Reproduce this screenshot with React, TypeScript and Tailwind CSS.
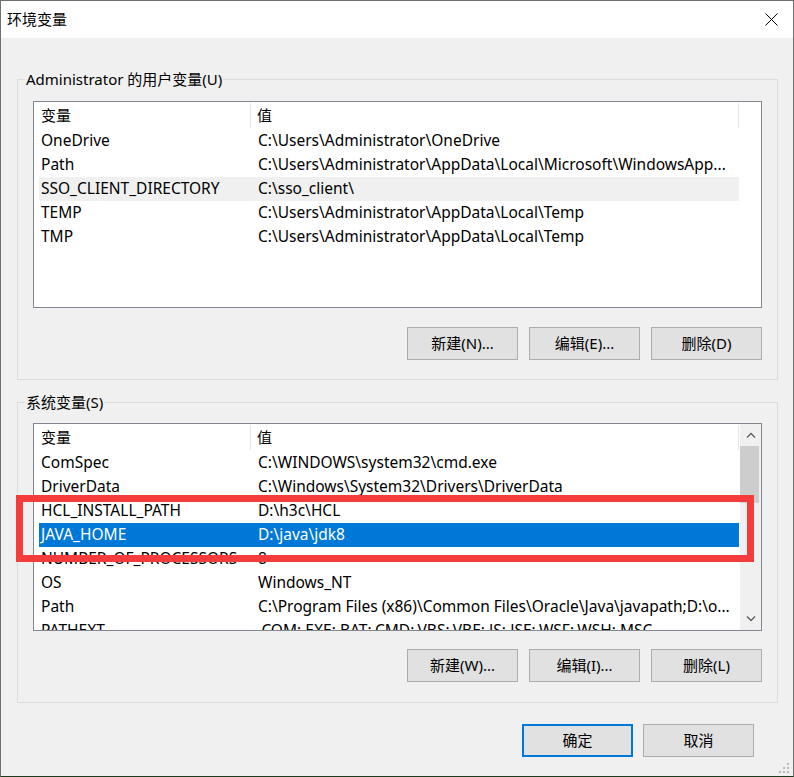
import React from 'react';

type Row = { name: string; value: string };

const userVars: Row[] = [
  { name: 'OneDrive', value: 'C:\\Users\\Administrator\\OneDrive' },
  { name: 'Path', value: 'C:\\Users\\Administrator\\AppData\\Local\\Microsoft\\WindowsApp...' },
  { name: 'SSO_CLIENT_DIRECTORY', value: 'C:\\sso_client\\' },
  { name: 'TEMP', value: 'C:\\Users\\Administrator\\AppData\\Local\\Temp' },
  { name: 'TMP', value: 'C:\\Users\\Administrator\\AppData\\Local\\Temp' },
];

const sysVars: Row[] = [
  { name: 'ComSpec', value: 'C:\\WINDOWS\\system32\\cmd.exe' },
  { name: 'DriverData', value: 'C:\\Windows\\System32\\Drivers\\DriverData' },
  { name: 'HCL_INSTALL_PATH', value: 'D:\\h3c\\HCL' },
  { name: 'JAVA_HOME', value: 'D:\\java\\jdk8' },
  { name: 'NUMBER_OF_PROCESSORS', value: '8' },
  { name: 'OS', value: 'Windows_NT' },
  { name: 'Path', value: 'C:\\Program Files (x86)\\Common Files\\Oracle\\Java\\javapath;D:\\o...' },
  { name: 'PATHEXT', value: '.COM;.EXE;.BAT;.CMD;.VBS;.VBE;.JS;.JSE;.WSF;.WSH;.MSC' },
];

const font = { fontFamily: '"Noto Sans", "Noto Sans CJK SC", sans-serif' };

const Button: React.FC<{ label: string; primary?: boolean }> = ({ label, primary }) => (
  <button
    className={
      primary
        ? 'w-[111px] h-[33px] bg-[#e1e1e1] border-2 border-[#0078d7] text-[15px] text-black'
        : 'w-[111px] h-[33px] bg-[#e1e1e1] border border-[#adadad] text-[15px] text-black'
    }
  >
    {label}
  </button>
);

const ListView: React.FC<{ rows: Row[]; hover?: number; selected?: number; scroll?: boolean; height: string }> = ({
  rows,
  hover,
  selected,
  scroll,
  height,
}) => (
  <div className={`${height} border border-[#828790] bg-white flex overflow-hidden`}>
    <div className="flex-1 pl-[5px] overflow-hidden">
      <div className="w-[700px] h-[27px] flex text-[15px]">
        <div className="w-[212px] pl-[2px] flex items-center border-r border-[#e5e5e5] my-[1px]">变量</div>
        <div className="flex-1 pl-[6px] flex items-center border-r border-[#e5e5e5] my-[1px]">值</div>
      </div>
      {rows.map((r, i) => {
        const isSel = i === selected;
        const isHover = i === hover;
        return (
          <div
            key={r.name}
            className={
              'w-[700px] h-[24px] flex items-center text-[15.5px] whitespace-nowrap ' +
              (isSel ? 'bg-[#0078d7] text-white' : isHover ? 'bg-[#f0f0f0] text-black' : 'text-black')
            }
          >
            <div className="w-[213px] pl-[2px] overflow-hidden">{r.name}</div>
            <div className="flex-1 pl-[6px] overflow-hidden">{r.value}</div>
          </div>
        );
      })}
    </div>
    {scroll && (
      <div className="w-[21px] bg-[#f0f0f0] flex flex-col">
        <div className="h-[22px] flex items-center justify-center">
          <svg width="10" height="6" viewBox="0 0 10 6">
            <path d="M1 5.5 L5 1.5 L9 5.5" fill="none" stroke="#606060" strokeWidth="1.4" />
          </svg>
        </div>
        <div className="h-[57px] mr-[2px] bg-[#cdcdcd]" />
        <div className="flex-1" />
        <div className="h-[22px] flex items-center justify-center">
          <svg width="10" height="6" viewBox="0 0 10 6">
            <path d="M1 0.5 L5 4.5 L9 0.5" fill="none" stroke="#606060" strokeWidth="1.4" />
          </svg>
        </div>
      </div>
    )}
  </div>
);

const App: React.FC = () => {
  return (
    <div
      className="relative w-[794px] h-[777px] bg-[#f0f0f0] border border-[#707070] border-b-[#1e3a1e] text-black flex flex-col"
      style={font}
    >
      <div className="h-[37px] bg-white flex items-center justify-between pl-[6px] pr-[15px]">
        <span className="text-[15px]">环境变量</span>
        <svg width="13" height="13" viewBox="0 0 13 13">
          <path d="M0.5 0.5 L12.5 12.5 M12.5 0.5 L0.5 12.5" stroke="#000" strokeWidth="1" />
        </svg>
      </div>

      <fieldset className="ml-[16px] mr-[15px] mt-[31px] border border-[#dcdcdc] px-[15px] pt-[12px] pb-[19px]">
        <legend className="-ml-[8px] px-[1px] text-[15px] leading-[20px]">Administrator 的用户变量(U)</legend>
        <ListView rows={userVars} hover={2} height="h-[207px]" />
        <div className="flex justify-end gap-[11px] mt-[19px]">
          <Button label="新建(N)..." />
          <Button label="编辑(E)..." />
          <Button label="删除(D)" />
        </div>
      </fieldset>

      <fieldset className="ml-[16px] mr-[15px] mt-[12px] border border-[#dcdcdc] px-[15px] pt-[11px] pb-[20px]">
        <legend className="-ml-[8px] px-[1px] text-[15px] leading-[20px]">系统变量(S)</legend>
        <ListView rows={sysVars} selected={3} scroll height="h-[208px]" />
        <div className="flex justify-end gap-[11px] mt-[18px]">
          <Button label="新建(W)..." />
          <Button label="编辑(I)..." />
          <Button label="删除(L)" />
        </div>
      </fieldset>

      <div className="flex justify-end gap-[10px] mt-[21px] mr-[39px]">
        <Button label="确定" primary />
        <Button label="取消" />
      </div>

      <div className="absolute left-[15px] top-[494px] w-[738px] h-[67px] border-[7px] border-[#f43c3c] pointer-events-none" />

      <svg className="absolute right-[3px] bottom-[2px]" width="12" height="12" viewBox="0 0 12 12">
        <rect x="9" y="1" width="2" height="2" fill="#b8b8b8" />
        <rect x="5" y="5" width="2" height="2" fill="#b8b8b8" />
        <rect x="9" y="5" width="2" height="2" fill="#b8b8b8" />
        <rect x="1" y="9" width="2" height="2" fill="#b8b8b8" />
        <rect x="5" y="9" width="2" height="2" fill="#b8b8b8" />
        <rect x="9" y="9" width="2" height="2" fill="#b8b8b8" />
      </svg>
    </div>
  );
};

export default App;
